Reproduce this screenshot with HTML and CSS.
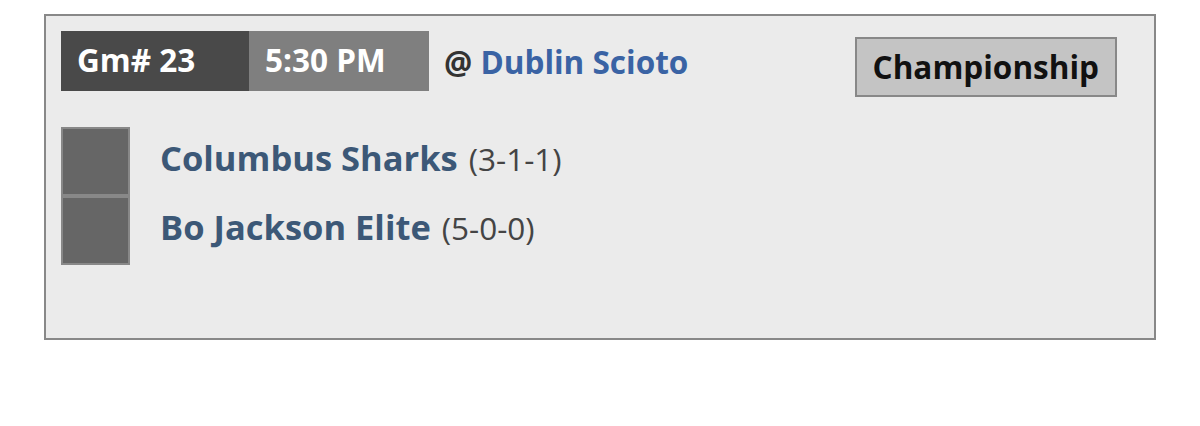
FILE: index.html
```html
<!DOCTYPE html>
<html lang="en">
<head>
    <meta charset="UTF-8">
    <meta name="viewport" content="width=device-width, initial-scale=1.0">
    <title>Game 23</title>
    <link rel="stylesheet" href="styles.css">
</head>
<body>
    <div class="game">
        <div class="game-head">
            <div class="game-num">Gm# 23</div>
            <div class="game-time">5:30 PM</div>
            <div class="venue">@ <a href="#">Dublin Scioto</a></div>
            <div class="round">Championship</div>
        </div>

        <div class="teams">
            <div class="team">
                <div class="score"></div>
                <div class="name">Columbus Sharks <span class="record">(3-1-1)</span></div>
            </div>
            <div class="team">
                <div class="score"></div>
                <div class="name">Bo Jackson Elite <span class="record">(5-0-0)</span></div>
            </div>
        </div>
    </div>
</body>
</html>
```

FILE: styles.css
```css
body {
    margin: 0;
    padding: 14px 44px;
    font-family: "Open Sans", Arial, sans-serif;
    background: white;
}
.game {
    height: 292px;
    background: #ebebeb;
    border: 2px solid #888;
    padding: 15px;
}
.game-head {
    display: flex;
    align-items: flex-start;
}
.game-num, .game-time {
    height: 60px;
    line-height: 58px;
    padding: 0 16px;
    font-size: 31.5px;
    font-weight: bold;
    color: white;
    box-sizing: border-box;
    white-space: nowrap;
}
.game-num {
    width: 188px;
    background: #494949;
}
.game-time {
    width: 180px;
    background: #7f7f7f;
}
.venue {
    margin-left: 15px;
    line-height: 62px;
    font-size: 31.5px;
    font-weight: bold;
    color: #333;
}
.venue a {
    color: #3a63a4;
    text-decoration: none;
}
.round {
    margin: 6px 22px 0 auto;
    height: 60px;
    line-height: 56px;
    padding: 0 16px;
    border: 2px solid #888;
    background: #c4c4c4;
    font-size: 31.5px;
    font-weight: bold;
    color: #111;
    box-sizing: border-box;
}
.teams {
    margin-top: 30px;
}
.team {
    display: flex;
    align-items: center;
}
.score {
    width: 65px;
    height: 65px;
    border: 2px solid #888;
    background: #666;
}
.name {
    margin-left: 30px;
    margin-top: -6px;
    line-height: 40px;
    font-size: 34.5px;
    font-weight: bold;
    color: #3c5877;
}
.record {
    margin-left: 2px;
    font-size: 31.5px;
    font-weight: normal;
    color: #444;
}
```
